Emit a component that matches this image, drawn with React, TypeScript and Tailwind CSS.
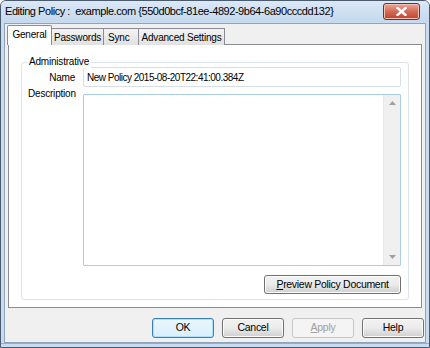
import React from "react";

const font = { fontFamily: '"Liberation Sans", Arial, sans-serif' };

function Btn({ label, u, focused, disabled, w = "w-[62px]" }: { label: string; u?: number; focused?: boolean; disabled?: boolean; w?: string }) {
  const first = u === undefined ? null : label.slice(0, 1);
  const rest = u === undefined ? label : label.slice(1);
  return (
    <div
      className={`${w} h-[20px] rounded-[3px] flex items-center justify-center text-[10.5px] tracking-[-0.3px] ${
        disabled
          ? "border border-[#c5c5c5] bg-[#f4f4f4] text-[#a0a0a0]"
          : focused
          ? "border border-[#3c7fb1] bg-gradient-to-b from-[#eaf6fd] to-[#d9f0fc] text-black shadow-[inset_0_0_0_1px_#a7e1fb]"
          : "border border-[#707070] bg-gradient-to-b from-[#f2f2f2] via-[#ebebeb] to-[#cfcfcf] text-black shadow-[inset_0_0_0_1px_#fcfcfc]"
      }`}
    >
      {first !== null ? <span className="underline">{first}</span> : null}
      {rest}
    </div>
  );
}

export default function App() {
  return (
    <div style={font} className="w-[430px] h-[348px] relative bg-[#c9dbf0] border border-[#4b5b6e] rounded-t-[6px] flex flex-col overflow-hidden">
      {/* title bar */}
      <div className="h-[21px] flex items-center pl-[4px] bg-gradient-to-b from-[#dbe8f6] to-[#c4d8ef]">
        <span className="text-[11px] text-black tracking-[-0.45px]">
          Editing Policy :&nbsp; example.com {"{550d0bcf-81ee-4892-9b64-6a90cccdd132}"}
        </span>
      </div>
      <div className="absolute right-[9px] top-[2px] w-[37px] h-[17px] rounded-[3px] border border-[#6d3030] bg-gradient-to-b from-[#e9a99c] via-[#d26a55] to-[#c0402c] flex items-center justify-center shadow-[inset_0_0_0_1px_#f3c2b5]">
        <svg width="11" height="9" viewBox="0 0 11 9">
          <path d="M1.5 1 L9.5 8 M9.5 1 L1.5 8" stroke="#ffffff" strokeWidth="2.4" strokeLinecap="square" />
        </svg>
      </div>
      {/* client */}
      <div className="flex-1 mx-[3px] mb-[4px] mt-[1px] border border-[#8ea3bc] bg-[#f0f0f0] flex flex-col">
        <div className="px-[3px] pt-[1px] flex-1 flex flex-col">
          {/* tabs */}
          <div className="flex items-end h-[20px] text-[10px] tracking-[-0.2px] text-black relative z-10">
            <div className="h-[20px] w-[45px] -ml-[1px] justify-center border border-[#898c95] border-b-0 bg-white rounded-t-[2px] flex items-center pb-[2px]">
              General
            </div>
            <div className="h-[17px] w-[52px] justify-center border border-[#898c95] border-b-0 border-l-0 bg-gradient-to-b from-[#f3f3f3] to-[#e1e1e1] flex items-center">
              Passwords
            </div>
            <div className="h-[17px] w-[35px] pl-[4px] border border-[#898c95] border-b-0 border-l-0 bg-gradient-to-b from-[#f3f3f3] to-[#e1e1e1] flex items-center">
              Sync
            </div>
            <div className="h-[17px] w-[86px] justify-center border border-[#898c95] border-b-0 border-l-0 bg-gradient-to-b from-[#f3f3f3] to-[#e1e1e1] flex items-center">
              Advanced Settings
            </div>
          </div>
          {/* panel */}
          <div className="h-[264px] -mt-[1px] border border-[#898c95] bg-white px-[12px] pt-[17px]">
            <div className="relative h-[238px] border border-[#dde4ec] rounded-[3px] pt-[4px]">
              <span className="absolute -top-[7px] left-[5px] bg-white px-[2px] text-[10px] tracking-[-0.2px] text-black leading-[12px]">
                Administrative
              </span>
              <div className="flex items-center h-[20px]">
                <div className="w-[53px] text-right text-[10px] tracking-[-0.2px] text-black">Name</div>
                <div className="ml-[8px] w-[318px] h-[20px] border border-[#d6dee7] rounded-[2px] flex items-center px-[3px] text-[10px] tracking-[-0.5px] text-black">
                  New Policy 2015-08-20T22:41:00.384Z
                </div>
              </div>
              <div className="flex mt-[7px]">
                <div className="w-[61px] pl-[6px] -mt-[7px] text-[10px] tracking-[-0.2px] text-black leading-[13px]">Description</div>
                <div className="w-[318px] h-[172px] border border-[#a9cde6] rounded-[1px] flex justify-end">
                  <div className="w-[17px] h-full bg-[#f0f0f0] border-l border-[#e9e9e9] flex flex-col items-center justify-between py-[6px]">
                    <svg width="7" height="4" viewBox="0 0 7 4"><path d="M3.5 0 L7 4 L0 4 Z" fill="#a0a0a0" /></svg>
                    <svg width="7" height="4" viewBox="0 0 7 4"><path d="M0 0 L7 0 L3.5 4 Z" fill="#a0a0a0" /></svg>
                  </div>
                </div>
              </div>
              <div className="flex justify-end mt-[9px] pr-[7px]">
                <div className="w-[137px] h-[19px] rounded-[3px] border border-[#707070] bg-gradient-to-b from-[#f2f2f2] via-[#ebebeb] to-[#cfcfcf] shadow-[inset_0_0_0_1px_#fcfcfc] flex items-center justify-center text-[10.5px] tracking-[-0.3px] text-black">
                  <span className="underline">P</span>review Policy Document
                </div>
              </div>
            </div>
          </div>
          {/* buttons */}
          <div className="flex justify-end gap-[8px] mt-[10px] -mr-[2px]">
            <Btn label="OK" focused />
            <Btn label="Cancel" />
            <Btn label="Apply" u={0} disabled />
            <Btn label="Help" />
          </div>
        </div>
      </div>
      <div className="absolute bottom-[3px] left-0 right-0 h-[1px] bg-[#5fc0e8]" />
    </div>
  );
}
